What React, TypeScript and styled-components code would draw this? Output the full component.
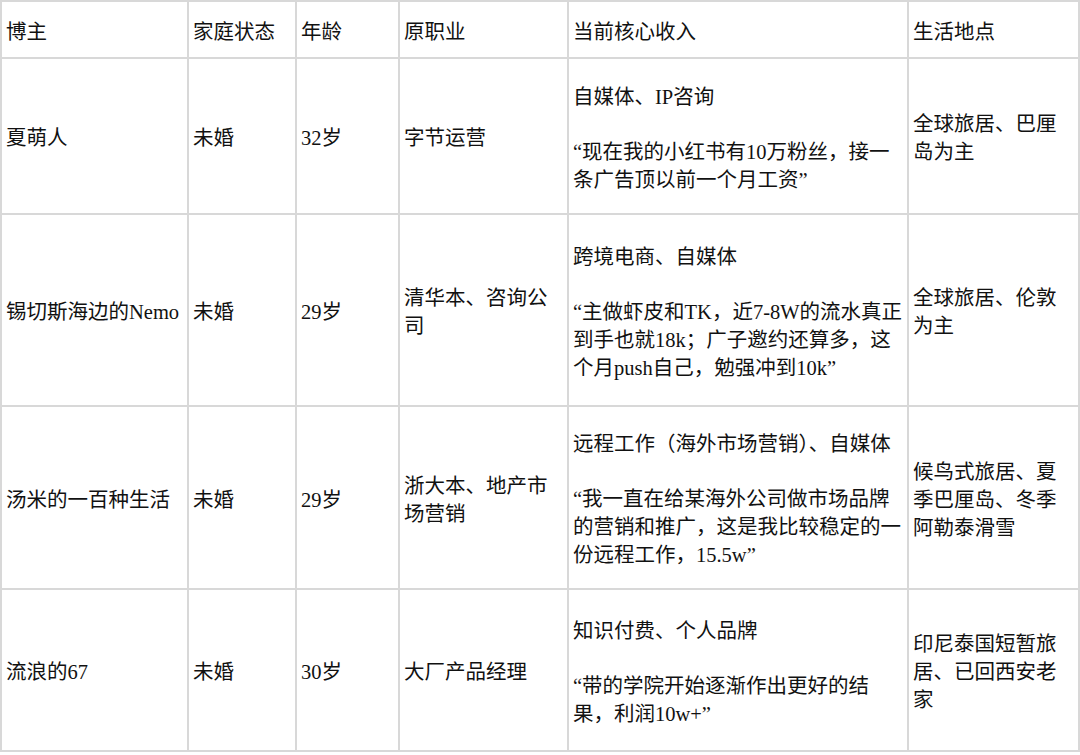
import React from 'react';
import styled, { createGlobalStyle } from 'styled-components';

const GlobalStyle = createGlobalStyle`
  html, body {
    margin: 0;
    padding: 0;
    background: #ffffff;
    overflow: hidden;
  }
`;

const Table = styled.table`
  width: 1078px;
  table-layout: fixed;
  border-collapse: collapse;
  font-family: "Liberation Serif", "Noto Sans CJK SC", serif;
  font-size: 20.5px;
  line-height: 28px;
  color: #111;
  border-top: 2px solid #6a6a6a;
  border-left: 2px solid #555;
`;

const Row = styled.tr<{ $h: number }>`
  height: ${p => p.$h}px;
`;

const Cell = styled.td`
  border: 2px solid #d8d8d8;
  padding: 4px 4px 0;
  vertical-align: middle;
  text-align: left;
  overflow: hidden;
`;

const HeadCell = styled(Cell).attrs({ as: 'th' })`
  font-weight: normal;
`;

const Line = styled.span`
  display: block;
  white-space: nowrap;
`;

const Para = styled.div`
  & + & {
    margin-top: 27px;
  }
`;

const widths = [187, 108, 103, 169, 340, 171];

const headers = ['博主', '家庭状态', '年龄', '原职业', '当前核心收入', '生活地点'];

type Entry = {
  name: string;
  status: string;
  age: string;
  job: string[];
  income: string[][];
  place: string[];
  h: number;
};

const rows: Entry[] = [
  {
    name: '夏萌人',
    status: '未婚',
    age: '32岁',
    job: ['字节运营'],
    income: [['自媒体、IP咨询'], ['“现在我的小红书有10万粉丝，接一', '条广告顶以前一个月工资”']],
    place: ['全球旅居、巴厘', '岛为主'],
    h: 156,
  },
  {
    name: '锡切斯海边的Nemo',
    status: '未婚',
    age: '29岁',
    job: ['清华本、咨询公', '司'],
    income: [
      ['跨境电商、自媒体'],
      ['“主做虾皮和TK，近7-8W的流水真正', '到手也就18k；广子邀约还算多，这', '个月push自己，勉强冲到10k”'],
    ],
    place: ['全球旅居、伦敦', '为主'],
    h: 192,
  },
  {
    name: '汤米的一百种生活',
    status: '未婚',
    age: '29岁',
    job: ['浙大本、地产市', '场营销'],
    income: [
      ['远程工作（海外市场营销）、自媒体'],
      ['“我一直在给某海外公司做市场品牌', '的营销和推广，这是我比较稳定的一', '份远程工作，15.5w”'],
    ],
    place: ['候鸟式旅居、夏', '季巴厘岛、冬季', '阿勒泰滑雪'],
    h: 183,
  },
  {
    name: '流浪的67',
    status: '未婚',
    age: '30岁',
    job: ['大厂产品经理'],
    income: [['知识付费、个人品牌'], ['“带的学院开始逐渐作出更好的结', '果，利润10w+”']],
    place: ['印尼泰国短暂旅', '居、已回西安老', '家'],
    h: 162,
  },
];

const Lines: React.FC<{ items: string[] }> = ({ items }) => (
  <>
    {items.map((t, i) => (
      <Line key={i}>{t}</Line>
    ))}
  </>
);

export default function App() {
  return (
    <>
      <GlobalStyle />
      <Table>
        <colgroup>
          {widths.map((w, i) => (
            <col key={i} style={{ width: w }} />
          ))}
        </colgroup>
        <thead>
          <Row $h={57}>
            {headers.map(h => (
              <HeadCell key={h}>{h}</HeadCell>
            ))}
          </Row>
        </thead>
        <tbody>
          {rows.map(r => (
            <Row key={r.name} $h={r.h}>
              <Cell><Line>{r.name}</Line></Cell>
              <Cell><Line>{r.status}</Line></Cell>
              <Cell><Line>{r.age}</Line></Cell>
              <Cell><Lines items={r.job} /></Cell>
              <Cell>
                {r.income.map((p, i) => (
                  <Para key={i}><Lines items={p} /></Para>
                ))}
              </Cell>
              <Cell><Lines items={r.place} /></Cell>
            </Row>
          ))}
        </tbody>
      </Table>
    </>
  );
}
